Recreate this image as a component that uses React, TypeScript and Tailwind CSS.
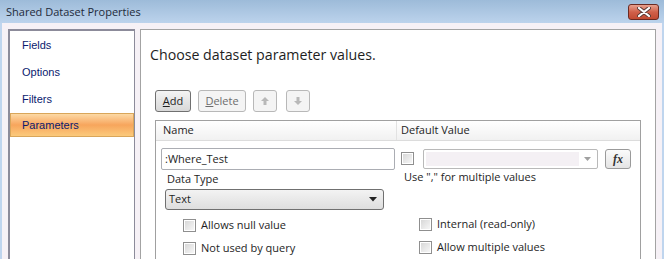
import React from "react";

const ui = { fontFamily: '"Open Sans", "Noto Sans", sans-serif' };
const nav = { fontFamily: '"Liberation Sans", Arial, sans-serif' };

function Check() {
  return (
    <div className="w-[13px] h-[13px] border border-[#8f8f8f] bg-white p-[1px] shrink-0">
      <div className="w-full h-full bg-gradient-to-br from-[#d8d8d8] to-[#f6f6f6]" />
    </div>
  );
}

function Arrow({ up }: { up: boolean }) {
  return (
    <svg width="10" height="10" viewBox="0 0 10 10">
      {up ? (
        <path d="M5 1 L9 5 L6.5 5 L6.5 9 L3.5 9 L3.5 5 L1 5 Z" fill="#b8b8b8" />
      ) : (
        <path d="M5 9 L9 5 L6.5 5 L6.5 1 L3.5 1 L3.5 5 L1 5 Z" fill="#b8b8b8" />
      )}
    </svg>
  );
}

export default function App() {
  return (
    <div className="w-[664px] h-[259px] overflow-hidden bg-[#bfd5ee] relative" style={ui}>
      {/* title bar */}
      <div className="h-[23px] bg-gradient-to-b from-[#9dbbd9] to-[#bcd3ec] flex items-center justify-between pl-[6px] pr-[5px]">
        <span className="text-[11px] text-[#1e2a3a] leading-none">Shared Dataset Properties</span>
        <div className="w-[31px] h-[16px] mt-[1px] rounded-[3px] border border-[#6b2a22] bg-gradient-to-b from-[#e7a08e] via-[#d0604a] to-[#c24a32] flex items-center justify-center">
          <svg width="14" height="10" viewBox="0 0 14 10">
            <path d="M2 1 L12 9 M12 1 L2 9" stroke="#5a3a36" strokeWidth="4" strokeLinecap="round" />
            <path d="M2 1 L12 9 M12 1 L2 9" stroke="#ffffff" strokeWidth="2.2" strokeLinecap="round" />
          </svg>
        </div>
      </div>
      {/* body */}
      <div className="ml-[2px] mr-[2px] h-[236px] bg-[#f6f1f6] flex pt-[6px] pl-[6px] pr-[6px] gap-[5px]">
        {/* left nav */}
        <div className="w-[127px] h-[240px] bg-white border-2 border-r-[1px] border-[#8c8b9a] pt-[1px]" style={nav}>
          {["Fields", "Options", "Filters"].map((t) => (
            <div key={t} className="h-[27px] flex items-center pl-[12px] text-[11px] text-[#0a1a6e]">
              {t}
            </div>
          ))}
          <div className="h-[24px] mx-[0px] flex items-center pl-[11px] text-[11px] text-[#0a1a6e] border border-[#d9a65a] bg-gradient-to-b from-[#fcd9a4] via-[#f7a55c] to-[#fbca7c]">
            Parameters
          </div>
        </div>
        {/* right panel */}
        <div className="w-[516px] h-[240px] bg-white border border-[#a3a3a3] pl-[9px] pt-[14px]">
          <div className="text-[14.2px] text-[#1e1e1e] leading-[22px]">Choose dataset parameter values.</div>
          <div className="flex items-center mt-[24px] ml-[5px] gap-[7px] h-[22px]">
            <div className="w-[36px] h-[22px] rounded-[3px] border border-[#707070] bg-gradient-to-b from-[#f4f4f4] to-[#d8d8d8] flex items-center justify-center text-[11px] text-[#1e1e1e]">
              <span><span className="underline">A</span>dd</span>
            </div>
            <div className="w-[48px] h-[22px] rounded-[3px] border border-[#b8b8b8] bg-[#f4f4f4] flex items-center justify-center text-[11px] text-[#6d6d6d]">
              <span><span className="underline">D</span>elete</span>
            </div>
            <div className="w-[24px] h-[22px] rounded-[3px] border border-[#b8b8b8] bg-[#f4f4f4] flex items-center justify-center">
              <Arrow up />
            </div>
            <div className="w-[24px] h-[22px] rounded-[3px] border border-[#b8b8b8] bg-[#f4f4f4] flex items-center justify-center ml-[2px]">
              <Arrow up={false} />
            </div>
          </div>
          {/* grid */}
          <div className="mt-[8px] ml-[5px] w-[486px] h-[140px] border border-[#a0a0a0] border-b-0">
            <div className="h-[20px] flex border-b border-[#dcdcdc] bg-gradient-to-b from-white to-[#f1f1f1] text-[11px] text-[#1e1e1e]">
              <div className="w-[241px] border-r border-[#e2e2e2] pl-[7px] flex items-center">Name</div>
              <div className="flex-1 pl-[4px] flex items-center">Default Value</div>
            </div>
            <div className="flex pt-[7px]">
              <div className="w-[241px] pl-[5px]">
                <div className="w-[234px] h-[22px] border border-[#abadb3] rounded-[2px] flex items-center pl-[3px] text-[11px] text-[#1e1e1e]">
                  :Where_Test
                </div>
                <div className="text-[11px] text-[#1e1e1e] pl-[6px] mt-[0px] h-[19px] flex items-center">Data Type</div>
                <div className="w-[219px] h-[21px] ml-[4px] border border-[#707070] rounded-[3px] bg-gradient-to-b from-[#f3f3f3] to-[#dedede] flex items-center justify-between pl-[3px] pr-[6px] text-[11px] text-[#1e1e1e]">
                  <span>Text</span>
                  <svg width="8" height="5" viewBox="0 0 8 5"><path d="M0 0 L8 0 L4 4.5 Z" fill="#222" /></svg>
                </div>
                <div className="ml-[22px] mt-[9px] flex items-center gap-[5px] h-[13px] text-[11px] text-[#1e1e1e]">
                  <Check /> <span>Allows null value</span>
                </div>
                <div className="ml-[22px] mt-[10px] flex items-center gap-[5px] h-[13px] text-[11px] text-[#1e1e1e]">
                  <Check /> <span>Not used by query</span>
                </div>
              </div>
              <div className="flex-1 pl-[4px]">
                <div className="flex items-center h-[21px]">
                  <Check />
                  <div className="ml-[9px] w-[175px] h-[20px] border border-[#b9b9b9] rounded-[2px] bg-white p-[2px] flex">
                    <div className="flex-1 bg-[#f4f0f4]" />
                    <div className="w-[16px] flex items-center justify-center">
                      <svg width="7" height="4" viewBox="0 0 7 4"><path d="M0 0 L7 0 L3.5 4 Z" fill="#a0a0a0" /></svg>
                    </div>
                  </div>
                  <div className="ml-[7px] w-[26px] h-[20px] rounded-[3px] border border-[#9a9a9a] bg-gradient-to-b from-[#fbfbfb] to-[#e4e4e4] flex items-center justify-center">
                    <span className="text-[12px] italic font-bold text-[#333]" style={{ fontFamily: '"Liberation Serif", serif' }}>fx</span>
                  </div>
                </div>
                <div className="text-[11px] text-[#1e1e1e] mt-[0px] pl-[3px] h-[16px] flex items-center">Use "," for multiple values</div>
                <div className="ml-[18px] mt-[33px] flex items-center gap-[5px] h-[13px] text-[11px] text-[#1e1e1e]">
                  <Check /> <span>Internal (read-only)</span>
                </div>
                <div className="ml-[18px] mt-[10px] flex items-center gap-[5px] h-[13px] text-[11px] text-[#1e1e1e]">
                  <Check /> <span>Allow multiple values</span>
                </div>
              </div>
            </div>
          </div>
        </div>
      </div>
    </div>
  );
}
